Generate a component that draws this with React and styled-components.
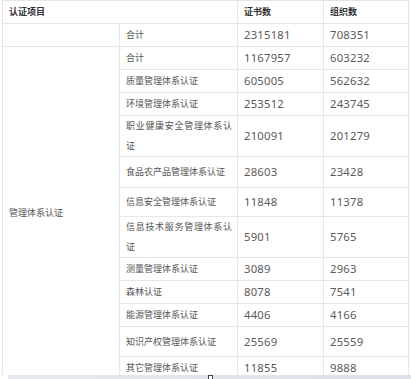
import React from "react";
import styled, { createGlobalStyle } from "styled-components";

const Global = createGlobalStyle`
  html, body { margin: 0; padding: 0; background: #fff; }
  body { font-family: "Noto Sans", "Noto Sans CJK SC", sans-serif; overflow: hidden; }
`;

const Page = styled.div`
  width: 411px;
  height: 379px;
  display: flex;
  flex-direction: column;
  overflow: hidden;
  position: relative;
`;

const Wrap = styled.div`
  padding-left: 2px;
  height: 375px;
  overflow: hidden;
`;

const Table = styled.table`
  border-collapse: collapse;
  table-layout: fixed;
  width: 406px;
  color: #555;
`;

const Row = styled.tr`
  height: ${(p) => p.$h}px;
`;

const Cell = styled.td`
  border: 1px solid #e6e6e6;
  padding: 0 5px 0 6px;
  vertical-align: middle;
  font-family: "Noto Sans CJK SC", sans-serif;
  font-size: 9px;
  line-height: 20px;
  text-align: justify;
  text-align-last: left;
  color: ${(p) => (p.$head ? "#333" : "#555")};
  font-weight: ${(p) => (p.$head ? 700 : 400)};
`;

const NumCell = styled(Cell)`
  font-family: "Noto Sans", sans-serif;
  font-size: 11.3px;
  letter-spacing: 0.2px;
  color: #5a5a5a;
`;

const Scrollbar = styled.div`
  height: 4px;
  margin-left: 8px;
  background: linear-gradient(to right, #e6eaef 0%, #dce1e7 100%);
  position: relative;
`;

const Thumb = styled.div`
  position: absolute;
  left: 200px;
  top: 0;
  width: 5px;
  height: 4px;
  border: 1px solid #444;
  border-bottom: none;
  box-sizing: border-box;
  background: #fff;
`;

const rows = [
  { name: "合计", a: "1167957", b: "603232", h: 23 },
  { name: "质量管理体系认证", a: "605005", b: "562632", h: 23 },
  { name: "环境管理体系认证", a: "253512", b: "243745", h: 23 },
  { name: "职业健康安全管理体系认证", a: "210091", b: "201279", h: 38 },
  { name: "食品农产品管理体系认证", a: "28603", b: "23428", h: 31 },
  { name: "信息安全管理体系认证", a: "11848", b: "11378", h: 29 },
  { name: "信息技术服务管理体系认证", a: "5901", b: "5765", h: 41 },
  { name: "测量管理体系认证", a: "3089", b: "2963", h: 23 },
  { name: "森林认证", a: "8078", b: "7541", h: 23 },
  { name: "能源管理体系认证", a: "4406", b: "4166", h: 23 },
  { name: "知识产权管理体系认证", a: "25569", b: "25559", h: 30 },
  { name: "其它管理体系认证", a: "11855", b: "9888", h: 22 },
];

export default function App() {
  return (
    <Page>
      <Global />
      <Wrap>
        <Table>
          <colgroup>
            <col style={{ width: 117 }} />
            <col style={{ width: 118 }} />
            <col style={{ width: 86 }} />
            <col style={{ width: 85 }} />
          </colgroup>
          <tbody>
            <Row $h={23}>
              <Cell $head colSpan={2}>认证项目</Cell>
              <Cell $head>证书数</Cell>
              <Cell $head>组织数</Cell>
            </Row>
            <Row $h={23}>
              <Cell></Cell>
              <Cell>合计</Cell>
              <NumCell>2315181</NumCell>
              <NumCell>708351</NumCell>
            </Row>
            {rows.map((r, i) => (
              <Row $h={r.h} key={r.name + i}>
                {i === 0 && <Cell rowSpan={rows.length}>管理体系认证</Cell>}
                <Cell>{r.name}</Cell>
                <NumCell>{r.a}</NumCell>
                <NumCell>{r.b}</NumCell>
              </Row>
            ))}
          </tbody>
        </Table>
      </Wrap>
      <Scrollbar>
        <Thumb />
      </Scrollbar>
    </Page>
  );
}
